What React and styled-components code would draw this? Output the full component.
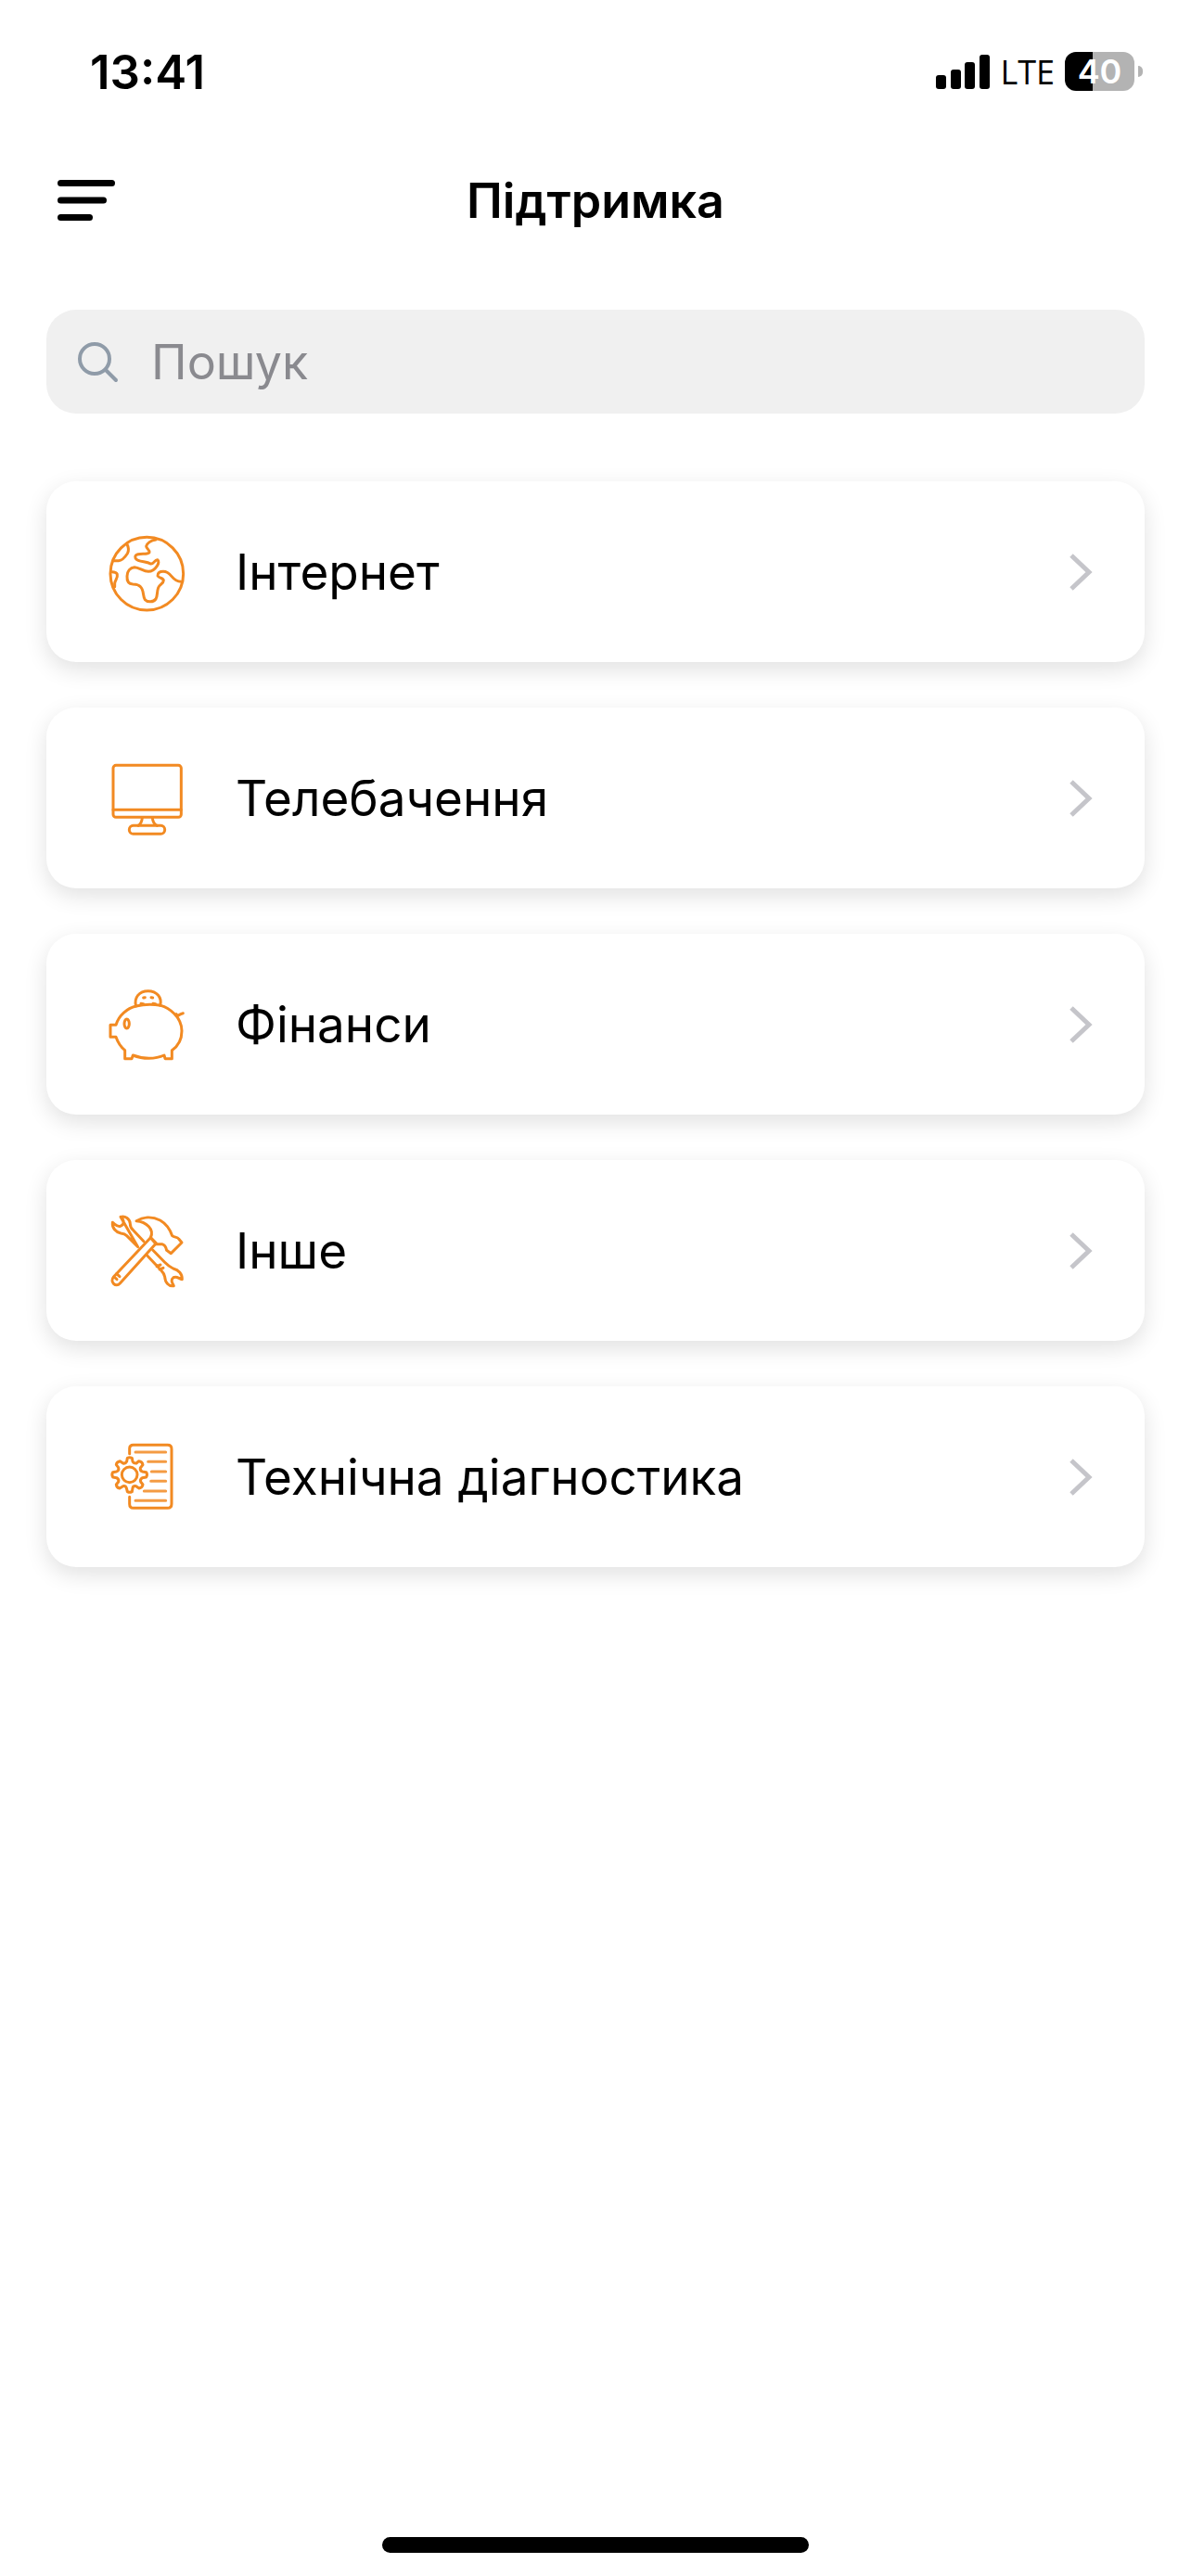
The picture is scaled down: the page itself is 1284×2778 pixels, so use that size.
import styled, { createGlobalStyle } from "styled-components";

const GlobalStyle = createGlobalStyle`
  * {
    box-sizing: border-box;
  }

  body {
    margin: 0;
    background: #fff;
    color: #000;
    font-family: Inter, "Liberation Sans", sans-serif;
  }
`;

const Screen = styled.div`
  display: flex;
  flex-direction: column;
  min-height: 100vh;
`;

const StatusBar = styled.div`
  display: flex;
  align-items: center;
  justify-content: space-between;
  height: 154px;
  padding: 0 52px 0 97px;
`;

const Time = styled.time`
  font-size: 51px;
  font-weight: 600;
`;

const StatusIcons = styled.div`
  display: flex;
  align-items: center;
  gap: 11px;
`;

const Network = styled.span`
  font-family: "Open Sans", "Noto Sans", sans-serif;
  font-size: 36px;
  font-weight: 500;
`;

const Battery = styled.div`
  display: flex;
  align-items: center;
  gap: 4px;

  &::after {
    content: "";
    width: 5px;
    height: 12px;
    border-radius: 0 6px 6px 0;
    background: #b3b3b3;
  }
`;

const BatteryLevel = styled.span`
  width: 75px;
  height: 42px;
  border-radius: 12px;
  background: linear-gradient(
    to right,
    #000 ${(props) => props.$level}%,
    #b3b3b3 ${(props) => props.$level}%
  );
  color: #fff;
  font-size: 36px;
  font-weight: 600;
  line-height: 42px;
  text-align: center;
`;

const Header = styled.header`
  display: grid;
  grid-template-columns: 1fr auto 1fr;
  align-items: center;
  height: 124px;
  padding: 0 62px;
`;

const MenuButton = styled.button`
  display: flex;
  justify-self: start;
  padding: 0;
  border: 0;
  background: none;
`;

const Title = styled.h1`
  margin: 0;
  font-size: 52px;
  font-weight: 600;
`;

const Main = styled.main`
  display: flex;
  flex-direction: column;
  flex: 1;
  gap: 73px;
  padding: 56px 50px;
`;

const SearchField = styled.label`
  display: flex;
  align-items: center;
  gap: 34px;
  height: 112px;
  padding: 0 33px;
  border-radius: 32px;
  background: #f0f0f0;
`;

const SearchInput = styled.input`
  flex: 1;
  min-width: 0;
  padding: 0;
  border: 0;
  outline: 0;
  background: none;
  color: #000;
  font-family: inherit;
  font-size: 52px;

  &::placeholder {
    color: #8a8a8f;
    opacity: 1;
  }
`;

const TopicList = styled.ul`
  display: flex;
  flex-direction: column;
  gap: 49px;
  margin: 0;
  padding: 0;
  list-style: none;
`;

const TopicCard = styled.a`
  display: flex;
  align-items: center;
  gap: 50px;
  height: 195px;
  padding: 0 56px 0 64px;
  border-radius: 32px;
  background: #fff;
  box-shadow: 0 8px 24px rgba(0, 0, 0, 0.12);
  color: #000;
  text-decoration: none;
`;

const TopicIcon = styled.svg`
  flex: none;
  width: 90px;
  height: 90px;
  fill: none;
  stroke: #f28a22;
  stroke-width: 9;
  stroke-linecap: round;
  stroke-linejoin: round;
`;

const TopicName = styled.span`
  flex: 1;
  font-size: 53px;
`;

const HomeIndicator = styled.div`
  align-self: center;
  width: 460px;
  height: 17px;
  margin-bottom: 25px;
  border-radius: 9px;
  background: #000;
`;

const GlobeIcon = () => (
  <TopicIcon viewBox="42 35 270 270" aria-hidden="true">
    <circle cx="175" cy="175" r="118" />
    <path d="M111 80C116 90 118 100 112 110C104 122 94 133 84 133C76 134 71 133 67 133" />
    <path d="M62 169C69 169 77 171 79 177C82 190 71 196 71 207V217" />
    <path d="M204 65C188 67 175 77 173 86C174 96 185 98 183 106C178 115 148 107 139 116C134 122 139 129 147 132C161 137 176 136 187 143C197 146 200 129 209 130C215 133 213 143 208 150C200 162 192 168 180 168C164 168 150 155 135 154C121 155 111 167 111 183C110 198 116 208 130 209C143 209 149 211 155 218C166 229 161 247 169 259C177 268 196 268 204 257C210 247 207 233 212 220C216 210 229 207 229 197C228 189 213 189 210 182C209 172 216 168 228 168C257 168 252 199 286 201" />
  </TopicIcon>
);

const MonitorIcon = () => (
  <TopicIcon viewBox="42 47 270 270" aria-hidden="true">
    <rect x="66" y="75" width="220" height="168" rx="9" />
    <path d="M66 219H286M160 245C159 258 154 266 147 270M193 245C194 258 199 266 208 270" />
    <rect x="118" y="270" width="115" height="27" rx="13" />
  </TopicIcon>
);

const PiggyIcon = () => (
  <TopicIcon viewBox="42 44 270 270" aria-hidden="true">
    <path d="M140 119C112 126 84 148 75 180H57V219H75C82 239 91 252 104 262V289H126L130 278C162 291 202 291 231 278L234 289H256V262C279 246 288 225 288 199C288 153 244 123 220 117C194 112 164 113 140 119Z" />
    <path d="M140 119C132 91 151 70 179 70C207 70 225 91 218 117" />
    <path d="M156 111L164 112M195 111L203 112M164 92L169 91M189 91L194 92" />
    <ellipse cx="110" cy="176" rx="8" ry="15" />
    <path d="M273 151C279 149 279 145 292 142M274 151L270 145" />
  </TopicIcon>
);

const ToolsIcon = () => (
  <TopicIcon viewBox="42 41 270 270" aria-hidden="true">
    <path d="M90 66C105 61 120 73 121 88C121 98 125 104 131 109L165 145M146 163L110 127C104 121 98 120 91 119C75 116 62 102 64 84C73 90 79 99 89 96C103 91 103 77 90 66Z" />
    <path d="M187 133L205 151L88 281C75 296 53 276 68 259Z" />
    <path d="M141 79C161 67 190 63 218 77C237 88 249 104 257 127C264 133 273 130 278 137L288 149L253 184L239 174C237 164 235 157 224 154H205L187 133C200 107 174 82 141 79Z" />
    <path d="M194 173L232 212C247 227 249 228 260 233C278 237 290 251 289 268C279 267 273 256 261 262C251 270 256 278 262 289C246 292 234 278 233 260C232 251 228 246 222 240L176 191M207 226L219 221M216 236L228 231" />
    <path d="M77 250L87 259M69 260L78 268" />
  </TopicIcon>
);

const DiagnosticsIcon = () => (
  <TopicIcon viewBox="42 38 270 270" aria-hidden="true">
    <path d="M119 97V81Q119 69 131 69H242Q255 69 255 82V260Q255 273 242 273H131Q119 273 119 260V237" />
    <path d="M138 92H236M179 123H236M190 155H236M188 186H236M166 218H236M138 249H236" opacity="0.85" />
    <path d="M110 122L112 111Q119 108 127 111L129 122Q132 129 141 128L149 121Q160 122 162 133L154 143Q152 151 160 155L173 157Q178 165 173 173L160 175Q152 180 155 188L162 197Q160 207 150 209L140 202Q131 200 129 208L127 220Q119 224 112 220L109 208Q106 200 98 202L87 209Q77 207 76 197L83 188Q86 180 77 175L65 173Q60 165 65 157L77 155Q86 151 83 142L76 133Q77 123 88 121L98 128Q106 130 110 122Z" />
    <circle cx="119" cy="165" r="25" />
  </TopicIcon>
);

const topics = [
  { id: "internet", name: "Інтернет", Icon: GlobeIcon },
  { id: "tv", name: "Телебачення", Icon: MonitorIcon },
  { id: "finance", name: "Фінанси", Icon: PiggyIcon },
  { id: "other", name: "Інше", Icon: ToolsIcon },
  { id: "diagnostics", name: "Технічна діагностика", Icon: DiagnosticsIcon },
];

const App = () => (
  <Screen>
    <GlobalStyle />

    <StatusBar>
      <Time>13:41</Time>
      <StatusIcons>
        <svg width="58" height="37" viewBox="0 0 58 37" aria-hidden="true">
          <rect y="22" width="11" height="15" rx="3" />
          <rect x="16" y="16" width="11" height="21" rx="3" />
          <rect x="31" y="8" width="11" height="29" rx="3" />
          <rect x="47" width="11" height="37" rx="3" />
        </svg>
        <Network>LTE</Network>
        <Battery>
          <BatteryLevel $level={40}>40</BatteryLevel>
        </Battery>
      </StatusIcons>
    </StatusBar>

    <Header>
      <MenuButton type="button" aria-label="Меню">
        <svg width="62" height="46" viewBox="0 0 62 46" aria-hidden="true">
          <rect y="1" width="62" height="7" rx="3.5" />
          <rect y="19.5" width="53" height="7" rx="3.5" />
          <rect y="38" width="38" height="7" rx="3.5" />
        </svg>
      </MenuButton>
      <Title>Підтримка</Title>
    </Header>

    <Main>
      <SearchField>
        <svg
          width="46"
          height="46"
          viewBox="0 0 46 46"
          fill="none"
          stroke="#8f9ba8"
          strokeWidth="4"
          strokeLinecap="round"
          aria-hidden="true"
        >
          <circle cx="19" cy="20" r="16" />
          <path d="M31 32L42 43" />
        </svg>
        <SearchInput type="text" placeholder="Пошук" aria-label="Пошук" />
      </SearchField>

      <TopicList>
        {topics.map(({ id, name, Icon }) => (
          <li key={id}>
            <TopicCard href={`#${id}`}>
              <Icon />
              <TopicName>{name}</TopicName>
              <svg
                width="26"
                height="42"
                viewBox="0 0 26 42"
                fill="none"
                stroke="#c5c5ca"
                strokeWidth="5"
                aria-hidden="true"
              >
                <path d="M3 3L22 21L3 39" />
              </svg>
            </TopicCard>
          </li>
        ))}
      </TopicList>
    </Main>

    <HomeIndicator />
  </Screen>
);

export default App;
